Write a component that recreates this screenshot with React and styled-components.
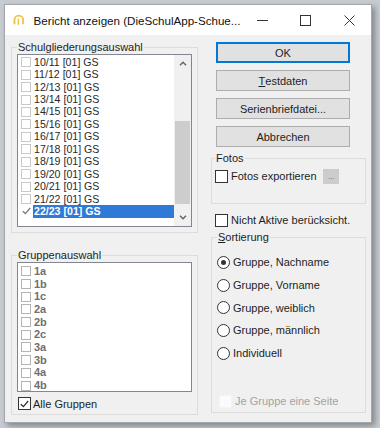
import React from "react"
import styled, {createGlobalStyle} from "styled-components"

const GlobalStyle = createGlobalStyle`
  html, body {
    margin:0;
    padding:0;
  }
  body {
    background:#c6ccd2;
    font-family:"Liberation Sans", Arial, sans-serif;
    font-size:11px;
    color:#1e1e1e;
    width:380px;
    height:428px;
    overflow:hidden;
  }
`

const Screen = styled.div`
  width:380px;
  height:428px;
  box-sizing:border-box;
  padding:4px 8px 5px 4px;
`

const Window = styled.div`
  height:100%;
  box-sizing:border-box;
  border:1px solid #a3a6aa;
  box-shadow:3px 3px 6px rgba(0,0,0,0.35);
  display:flex;
  flex-direction:column;
  background:#f0f0f0;
`

const TitleBar = styled.div`
  height:30px;
  background:#fff;
  display:flex;
  align-items:center;
  flex-shrink:0;
`

const AppIcon = styled.svg`
  width:12px;
  height:12px;
  margin-left:8px;
`

const Title = styled.span`
  margin-left:9px;
  font-size:11.6px;
  color:#111;
  flex:1;
  white-space:nowrap;
`

const CaptionButton = styled.div`
  width:45px;
  height:30px;
  display:flex;
  align-items:center;
  justify-content:center;
`

const Client = styled.div`
  flex:1;
  display:flex;
  gap:13px;
  padding:6px 5px 0 6px;
`

const LeftColumn = styled.div`
  width:187px;
  display:flex;
  flex-direction:column;
`

const RightColumn = styled.div`
  width:155px;
  display:flex;
  flex-direction:column;
`

const GroupBox = styled.fieldset`
  margin:${({top})=>top || 0}px 0 0 0;
  padding:0 ${({pad})=>pad}px ${({bottom})=>bottom}px ${({pad})=>pad}px;
  border:1px solid #dcdcdc;
  min-width:0;
  display:flex;
  flex-direction:column;
`

const Caption = styled.legend`
  padding:0 1px;
  margin-left:${({shift})=>shift || 0}px;
  line-height:13px;
  font-size:11px;
  color:#1e1e1e;
`

const ListBox = styled.div`
  height:${({h})=>h}px;
  box-sizing:border-box;
  border:1px solid #82878f;
  background:#fff;
  display:flex;
`

const ListItems = styled.div`
  flex:1;
  padding:${({top})=>top}px 0 0 3px;
`

const ListRow = styled.div`
  height:${({h})=>h}px;
  display:flex;
  align-items:center;
`

const ItemText = styled.span`
  margin-left:2px;
  padding:0 1px;
  height:13px;
  line-height:13px;
  flex:${({selected})=>selected ? 1 : "none"};
  font-size:${({grey})=>grey ? 11 : 10.6}px;
  font-weight:${({selected, grey})=>selected || grey ? "bold" : "normal"};
  color:${({selected, grey})=>selected ? "#fff" : grey ? "#707070" : "#2a2a2a"};
  background:${({selected})=>selected ? "#2f7ad6" : "transparent"};
`

const Box = styled.span`
  width:${({size})=>size}px;
  height:${({size})=>size}px;
  box-sizing:border-box;
  border:1px solid ${({tone})=>tone};
  background:${({fill})=>fill || "#fff"};
  display:inline-flex;
  align-items:center;
  justify-content:center;
  flex-shrink:0;
`

const BareCheck = styled.span`
  width:10px;
  height:10px;
  display:inline-flex;
  align-items:center;
  justify-content:center;
`

const ScrollBar = styled.div`
  width:17px;
  background:#f0f0f0;
  display:flex;
  flex-direction:column;
  align-items:center;
`

const ScrollArrow = styled.div`
  height:17px;
  width:17px;
  display:flex;
  align-items:center;
  justify-content:center;
`

const ScrollTrack = styled.div`
  flex:1;
  width:15px;
  display:flex;
  flex-direction:column;
`

const ScrollThumb = styled.div`
  margin-top:${({top})=>top}px;
  height:${({h})=>h}px;
  background:#cdcdcd;
`

const CheckRow = styled.label`
  display:flex;
  align-items:center;
  height:${({h})=>h || 14}px;
  margin:${({top})=>top || 0}px 0 0 ${({left})=>left || 0}px;
  gap:${({gap})=>gap || 3}px;
  color:${({disabled})=>disabled ? "#a2a2a2" : "#1e1e1e"};
`

const Button = styled.div`
  width:134px;
  height:21px;
  box-sizing:border-box;
  margin:${({top})=>top}px 0 0 5px;
  border:1px solid ${({primary})=>primary ? "#0078d7" : "#adadad"};
  box-shadow:${({primary})=>primary ? "inset 0 0 0 1px #0078d7" : "none"};
  background:#e1e1e1;
  display:flex;
  align-items:center;
  justify-content:center;
  color:#1e1e1e;
`

const Underline = styled.span`
  text-decoration:underline;
`

const DotsButton = styled.div`
  margin-left:auto;
  margin-right:23px;
  width:16px;
  height:15px;
  background:#cccccc;
  color:#8a8a8a;
  font-size:9px;
  display:flex;
  align-items:center;
  justify-content:center;
  letter-spacing:-0.5px;
`

const Radio = styled.span`
  width:13px;
  height:13px;
  box-sizing:border-box;
  border-radius:50%;
  border:1px solid #333;
  background:#fff;
  display:inline-flex;
  align-items:center;
  justify-content:center;
  flex-shrink:0;
  &::after {
    content:"";
    width:5px;
    height:5px;
    border-radius:50%;
    background:${({checked})=>checked ? "#333" : "transparent"};
  }
`

const Tick = ({color}) => (
  <svg width="9" height="8" viewBox="0 0 9 8">
    <path d="M0.8 4.2 L3.4 6.6 L8.2 1" fill="none" stroke={color} strokeWidth="1.3" />
  </svg>
)

const Chevron = ({up}) => (
  <svg width="8" height="5" viewBox="0 0 8 5">
    <path d={up ? "M1 4.2 L4 1.2 L7 4.2" : "M1 0.8 L4 3.8 L7 0.8"} fill="none" stroke="#606060" strokeWidth="1.3" />
  </svg>
)

const schulgliederungen = [
  "10/11", "11/12", "12/13", "13/14", "14/15", "15/16", "16/17",
  "17/18", "18/19", "19/20", "20/21", "21/22", "22/23"
]

const gruppen = ["1a", "1b", "1c", "2a", "2b", "2c", "3a", "3b", "4a", "4b"]

const sortierungen = [
  "Gruppe, Nachname", "Gruppe, Vorname", "Gruppe, weiblich", "Gruppe, männlich", "Individuell"
]

const App = () => {
  return (
    <Screen>
      <GlobalStyle />
      <Window>
        <TitleBar>
          <AppIcon viewBox="0 0 12 12">
            <path d="M1.5 10.5 V6 A4.5 4.5 0 0 1 10.5 6 V10.5" fill="none" stroke="#f2c24e" strokeWidth="2" />
            <path d="M5.5 4.5 V11" stroke="#f2c24e" strokeWidth="1.6" />
          </AppIcon>
          <Title>Bericht anzeigen (DieSchulApp-Schue...</Title>
          <CaptionButton>
            <svg width="11" height="11" viewBox="0 0 11 11"><path d="M0 5.5 H11" stroke="#333" strokeWidth="1" /></svg>
          </CaptionButton>
          <CaptionButton>
            <svg width="11" height="11" viewBox="0 0 11 11"><rect x="0.5" y="0.5" width="10" height="10" fill="none" stroke="#333" strokeWidth="1" /></svg>
          </CaptionButton>
          <CaptionButton>
            <svg width="11" height="11" viewBox="0 0 11 11"><path d="M0.5 0.5 L10.5 10.5 M10.5 0.5 L0.5 10.5" stroke="#333" strokeWidth="1" /></svg>
          </CaptionButton>
        </TitleBar>

        <Client>
          <LeftColumn>
            <GroupBox pad={5} bottom={5}>
              <Caption>Schulgliederungsauswahl</Caption>
              <ListBox h={173}>
                <ListItems top={1}>
                  {schulgliederungen.map((jahr, index) => {
                    const selected = index === schulgliederungen.length - 1
                    return (
                      <ListRow key={index} h={12.45}>
                        {selected ?
                          <BareCheck><Tick color="#7a7a7a" /></BareCheck>
                          :
                          <Box size={10} tone="#c9c9c9" />
                        }
                        <ItemText selected={selected}>{jahr} [01] GS</ItemText>
                      </ListRow>
                    )
                  })}
                </ListItems>
                <ScrollBar>
                  <ScrollArrow><Chevron up /></ScrollArrow>
                  <ScrollTrack>
                    <ScrollThumb top={49} h={83} />
                  </ScrollTrack>
                  <ScrollArrow><Chevron /></ScrollArrow>
                </ScrollBar>
              </ListBox>
            </GroupBox>

            <GroupBox pad={5} bottom={4} top={16}>
              <Caption>Gruppenauswahl</Caption>
              <ListBox h={130}>
                <ListItems top={2}>
                  {gruppen.map((gruppe, index) => (
                    <ListRow key={index} h={12.7}>
                      <Box size={10} tone="#b4b4b4" />
                      <ItemText grey>{gruppe}</ItemText>
                    </ListRow>
                  ))}
                </ListItems>
              </ListBox>
              <CheckRow top={5} left={1} h={13} gap={2}>
                <Box size={13} tone="#333"><Tick color="#333" /></Box>
                Alle Gruppen
              </CheckRow>
            </GroupBox>
          </LeftColumn>

          <RightColumn>
            <Button primary top={1}>OK</Button>
            <Button top={7}><Underline>T</Underline>estdaten</Button>
            <Button top={7}>Serienbriefdatei...</Button>
            <Button top={7}>Abbrechen</Button>

            <GroupBox pad={3} bottom={20} top={5}>
              <Caption>Fotos</Caption>
              <CheckRow top={4}>
                <Box size={13} tone="#333" />
                Fotos exportieren
                <DotsButton>...</DotsButton>
              </CheckRow>
            </GroupBox>

            <CheckRow top={9} left={4}>
              <Box size={13} tone="#333" />
              Nicht Aktive berücksicht.
            </CheckRow>

            <GroupBox pad={5} bottom={4} top={4}>
              <Caption><Underline>S</Underline>ortierung</Caption>
              <div style={{marginTop: 7}}>
                {sortierungen.map((sortierung, index) => (
                  <CheckRow key={index} h={22.7}>
                    <Radio checked={index === 0} />
                    {sortierung}
                  </CheckRow>
                ))}
              </div>
              <CheckRow top={30} left={2} disabled>
                <Box size={13} tone="#f4f4f4" fill="#fbfbfb" />
                Je Gruppe eine Seite
              </CheckRow>
            </GroupBox>
          </RightColumn>
        </Client>
      </Window>
    </Screen>
  )
}

export default App
